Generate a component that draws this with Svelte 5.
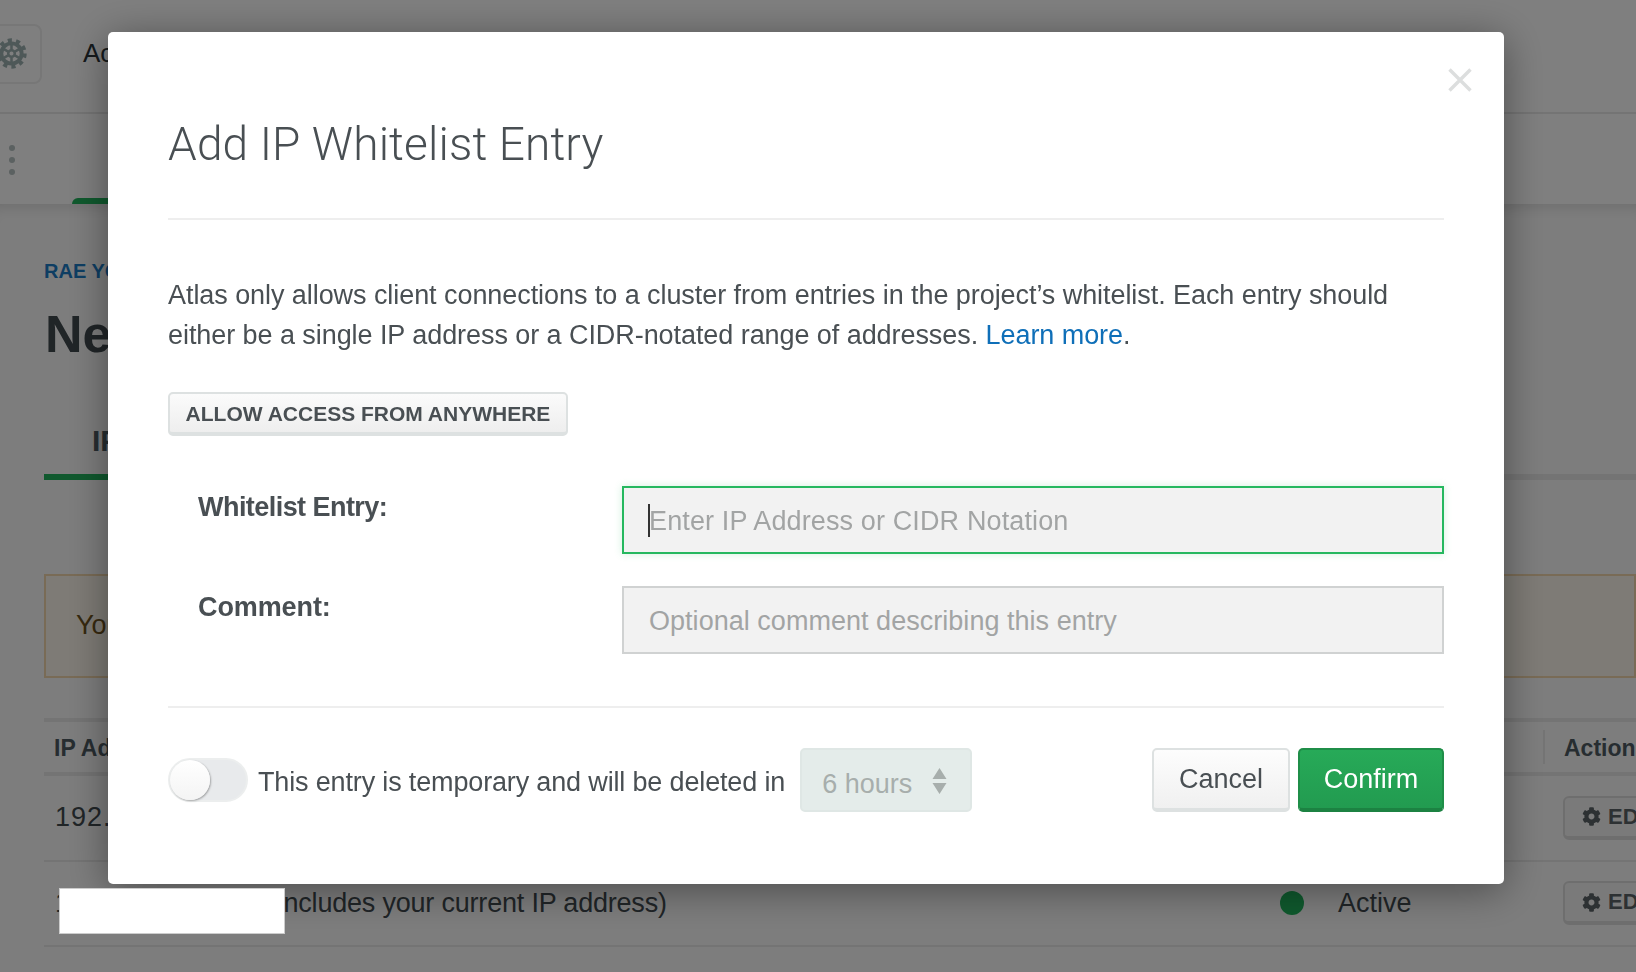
<script>
  const cog = "M487.4 315.7l-42.6-24.6c4.3-23.2 4.3-47 0-70.2l42.6-24.6c4.9-2.8 7.1-8.6 5.5-14-11.1-35.6-30-67.8-54.7-94.6-3.8-4.1-10-5.1-14.8-2.3L380.8 110c-17.9-15.4-38.5-27.3-60.8-35.1V25.8c0-5.6-3.9-10.5-9.4-11.7-36.7-8.2-74.3-7.8-109.2 0-5.5 1.2-9.4 6.1-9.4 11.7V75c-22.2 7.9-42.8 19.8-60.8 35.1L88.7 85.5c-4.9-2.8-11-1.9-14.8 2.3-24.7 26.7-43.6 58.9-54.7 94.6-1.7 5.4.6 11.2 5.5 14L67.3 221c-4.3 23.2-4.3 47 0 70.2l-42.6 24.6c-4.9 2.8-7.1 8.6-5.5 14 11.1 35.6 30 67.8 54.7 94.6 3.8 4.1 10 5.1 14.8 2.3l42.6-24.6c17.9 15.4 38.5 27.3 60.8 35.1v49.2c0 5.6 3.9 10.5 9.4 11.7 36.7 8.2 74.3 7.8 109.2 0 5.5-1.2 9.4-6.1 9.4-11.7v-49.2c22.2-7.9 42.8-19.8 60.8-35.1l42.6 24.6c4.9 2.8 11 1.9 14.8-2.3 24.7-26.7 43.6-58.9 54.7-94.6 1.5-5.5-.7-11.3-5.6-14.1zM256 336c-44.1 0-80-35.9-80-80s35.9-80 80-80 80 35.9 80 80-35.9 80-80 80z";
</script>

<div class="page">
  <header class="topbar">
    <div class="gearbtn">
      <svg class="wheel" viewBox="0 0 32 32" aria-hidden="true">
        <circle cx="16" cy="16" r="13.4" fill="none" stroke="#9cb0b0" stroke-width="4.6" stroke-dasharray="4.2 4.22"/>
        <circle cx="16" cy="16" r="10.5" fill="none" stroke="#9cb0b0" stroke-width="4"/>
        <circle cx="16" cy="16" r="3.4" fill="none" stroke="#9cb0b0" stroke-width="2.6"/>
        <path d="M16 6v6M16 20v6M7.3 11l5.2 3M19.5 18l5.2 3M7.3 21l5.2-3M19.5 14l5.2-3" stroke="#9cb0b0" stroke-width="2.6"/>
      </svg>
    </div>
    <span class="crumb">Access Manager</span>
  </header>
  <nav class="subnav">
    <div class="dots"><i></i><i></i><i></i></div>
    <div class="activetab"></div>
  </nav>
  <main class="content">
    <div class="project">RAE YOUNG'S ORG</div>
    <h1>Network Access</h1>
    <div class="tabs"><div class="tab">IP Whitelist</div></div>
    <div class="warning">You will only be able to connect to your cluster from the following list of IP Addresses:</div>
    <div class="table">
      <div class="thead">
        <span class="c1">IP Address</span>
        <span class="c3">Actions</span>
      </div>
      <div class="row">
        <span class="c1 ip">192.168.1.1</span>
        <span class="c2"></span>
        <span class="c3"><span class="edit"><svg viewBox="0 0 512 512"><path d={cog}/></svg>EDIT</span></span>
      </div>
      <div class="row">
        <span class="c1 cidr">1.2.3.4.5.6.7.1/32 (includes your current IP address)</span>
        <span class="c2"><i class="dot"></i>Active</span>
        <span class="c3"><span class="edit"><svg viewBox="0 0 512 512"><path d={cog}/></svg>EDIT</span></span>
      </div>
    </div>
  </main>
</div>

<div class="backdrop"></div>

<section class="modal" role="dialog" aria-label="Add IP Whitelist Entry">
  <svg class="close" viewBox="0 0 24 24" aria-hidden="true"><path d="M1.5 1.5l21 21M22.5 1.5l-21 21"/></svg>
  <h2>Add IP Whitelist Entry</h2>
  <p>Atlas only allows client connections to a cluster from entries in the project’s whitelist. Each entry should either be a single IP address or a CIDR-notated range of addresses. <a href="#learn">Learn more</a>.</p>
  <button class="anywhere">ALLOW ACCESS FROM ANYWHERE</button>
  <div class="field first">
    <label class="l1" for="entry">Whitelist Entry:</label>
    <div class="input focus" id="entry"><b class="caret"></b>Enter IP Address or CIDR Notation</div>
  </div>
  <div class="field">
    <label class="l2" for="comment">Comment:</label>
    <div class="input" id="comment">Optional comment describing this entry</div>
  </div>
  <footer>
    <span class="toggle"><span class="knob"></span></span>
    <span class="temp">This entry is temporary and will be deleted in</span>
    <span class="select">6 hours
      <svg viewBox="0 0 15 26" aria-hidden="true"><path d="M7.5 0l7 11H.5zM7.5 26L.5 15h14z"/></svg>
    </span>
    <span class="spacer"></span>
    <button class="cancel">Cancel</button>
    <button class="confirm">Confirm</button>
  </footer>
</section>

<div class="redact"></div>

<style>
  :global(body) { margin: 0; background: #fff; font-family: "Liberation Sans", Arial, sans-serif; overflow: hidden; }
  .page { width: 1636px; height: 972px; overflow: hidden; background: #fff; color: #3d4f58; display: flex; flex-direction: column; }

  .topbar { height: 112px; box-sizing: content-box; border-bottom: 2px solid #e8e8e8; display: flex; align-items: center; gap: 41px; flex: none; }
  .gearbtn { width: 61px; height: 60px; margin-left: -19px; margin-top: -5px; border: 2px solid #eee; border-radius: 8px; display: flex; align-items: center; justify-content: center; box-sizing: border-box; }
  .wheel { width: 31px; height: 31px; }
  .crumb { font-size: 26px; color: #2a3339; margin-top: -5px; }

  .subnav { height: 90px; flex: none; position: relative; display: flex; align-items: center; padding-left: 9px; }
  .dots { display: flex; flex-direction: column; gap: 6px; margin-top: 2px; }
  .dots i { width: 6px; height: 6px; border-radius: 50%; background: #b6c2c2; display: block; }
  .activetab { position: absolute; left: 72px; bottom: 0; width: 200px; height: 6px; background: #21b35d; border-radius: 6px 6px 0 0; }

  .content { padding: 55px 0 0 44px; flex: 1; box-shadow: inset 0 14px 14px -10px rgba(0, 0, 0, .12); background: #fbfbfb; }
  .project { font-size: 20px; line-height: 24px; font-weight: 700; color: #1c7cc6; }
  h1 { font-size: 52px; line-height: 60px; font-weight: 700; color: #414a4f; margin: 21px 0 0 1px; white-space: nowrap; }
  .tabs { margin-top: 56px; border-bottom: 6px solid #e8e8e8; height: 54px; }
  .tab { width: 160px; height: 54px; border-bottom: 6px solid #21b35d; font-size: 30px; font-weight: 700; color: #4e5b62; padding-left: 48px; line-height: 42px; white-space: nowrap; overflow: hidden; }
  .warning { margin-top: 94px; height: 104px; box-sizing: border-box; border: 2px solid #f3d7ac; background: #fdf7ec; color: #6e5320; font-size: 27px; line-height: 98px; padding-left: 30px; white-space: nowrap; }

  .table { margin-top: 40px; border-top: 4px solid #e8e8e8; font-size: 27px; color: #414a4f; }
  .thead { height: 50px; border-bottom: 4px solid #e8e8e8; display: flex; align-items: center; font-weight: 700; font-size: 23px; color: #4e5b62; }
  .row { height: 85.5px; box-sizing: border-box; border-bottom: 2px solid #e8e8e8; display: flex; align-items: center; }
  .c1 { padding-left: 11px; flex: none; white-space: nowrap; box-sizing: border-box; }
  .ip { letter-spacing: 1px; }
  .cidr { letter-spacing: -.2px; }
  .c2 { width: 283px; flex: none; display: flex; align-items: center; gap: 34px; }
  .c3 { white-space: nowrap; }
  .thead .c1 { width: 1499px; padding: 2px 0 0 10px; }
  .thead .c3 { border-left: 2px solid #e8e8e8; padding: 2px 0 0 19px; line-height: 32px; }
  .row .c1 { width: 1236px; }
  .dot { width: 24px; height: 24px; border-radius: 50%; background: #1fb35c; display: block; }
  .edit { display: inline-flex; align-items: center; gap: 7px; height: 44px; padding: 0 14px 0 17px; border: 2px solid #ddd; border-bottom-width: 4px; border-radius: 6px; font-weight: 700; font-size: 22px; color: #5a6266; box-sizing: border-box; background: #f5f5f5; vertical-align: middle; }
  .edit svg { width: 19px; height: 19px; fill: #5a6266; }

  .backdrop { position: fixed; inset: 0; background: rgba(0, 0, 0, .5); }
  .redact { position: fixed; left: 59px; top: 888px; width: 226px; height: 46px; background: #fff; box-sizing: border-box; border: 1px solid #ccc; }

  .modal { position: fixed; left: 108px; top: 32px; width: 1396px; height: 852px; box-sizing: border-box; background: #fff; border-radius: 5px; padding: 0 60px; box-shadow: 0 6px 40px rgba(0, 0, 0, .4); color: #494f53; }
  .close { position: absolute; left: 1340px; top: 36px; width: 24px; height: 24px; fill: none; stroke: #dcdede; stroke-width: 3.4; }
  h2 { margin: 0; padding: 80px 0 0; height: 188px; box-sizing: border-box; border-bottom: 2px solid #eeeeee; font-family: Roboto, sans-serif; font-weight: 300; font-size: 46px; line-height: 64px; letter-spacing: .14px; color: #494f53; }
  p { margin: 0; padding-top: 55px; font-size: 27px; line-height: 40px; letter-spacing: -.065px; color: #494f53; }
  a { color: #0f6fb8; text-decoration: none; }
  button { font-family: inherit; cursor: pointer; box-sizing: border-box; }
  .anywhere { display: block; margin-top: 37px; width: 400px; height: 44px; padding: 2px 0 0; border: 2px solid #dde1e1; border-bottom-width: 4px; border-radius: 5px; background: linear-gradient(#fbfbfb, #eeeeee); font-size: 21px; font-weight: 700; color: #494f53; }
  .field { display: flex; margin-top: 32px; align-items: flex-start; }
  .field.first { margin-top: 50px; }
  label { width: 454px; padding: 1px 0 0 30px; box-sizing: border-box; font-size: 27px; line-height: 40px; font-weight: 700; color: #494f53; flex: none; }
  .l1 { letter-spacing: -.55px; }
  .l2 { letter-spacing: -.1px; }
  .input { flex: 1; height: 68px; box-sizing: border-box; border: 2px solid #d0d2d2; background: #f2f2f2; color: #a2a4a4; font-size: 27px; line-height: 66px; padding-left: 25px; letter-spacing: .03px; position: relative; }
  .input.focus { border-color: #25b85f; box-shadow: 0 0 8px rgba(37, 184, 95, .2); letter-spacing: .13px; }
  .caret { position: absolute; left: 24px; top: 16px; width: 2px; height: 33px; background: #333; }
  footer { margin-top: 52px; padding-top: 40px; border-top: 2px solid #eeeeee; display: flex; align-items: flex-start; }
  .toggle { width: 80px; height: 44px; margin-top: 10px; border-radius: 22px; border: 2px solid #eceeee; background: #e8eaec; box-sizing: border-box; position: relative; flex: none; }
  .knob { position: absolute; left: 0; top: 0; width: 40px; height: 40px; border-radius: 50%; background: linear-gradient(#fff, #f4f4f4); box-shadow: 1px 1px 2px rgba(0, 0, 0, .3); }
  .temp { margin-left: 10px; font-size: 27px; line-height: 44px; margin-top: 12px; white-space: nowrap; letter-spacing: -.155px; color: #494f53; }
  .select { margin-left: 15px; width: 172px; height: 64px; box-sizing: border-box; border: 2px solid #dfe7e5; border-radius: 5px; background: #e4ecea; color: #a7aeac; font-size: 27px; line-height: 68px; padding-left: 20px; position: relative; flex: none; }
  .select svg { position: absolute; left: 130px; top: 18px; width: 15px; height: 26px; fill: #a7aeac; }
  .spacer { flex: 1; }
  .cancel { width: 138px; height: 64px; border: 2px solid #dde1e1; border-bottom-width: 4px; border-radius: 5px; background: linear-gradient(#fdfdfd, #f0f0f0); font-size: 27px; color: #494f53; padding: 1px 0 0; }
  .confirm { width: 146px; height: 64px; margin-left: 8px; border: 2px solid #1f8e48; border-bottom-width: 4px; border-bottom-color: #1c8242; border-radius: 5px; background: linear-gradient(#27aa58, #229b50); font-size: 27px; color: #fff; padding: 1px 0 0; }
</style>
